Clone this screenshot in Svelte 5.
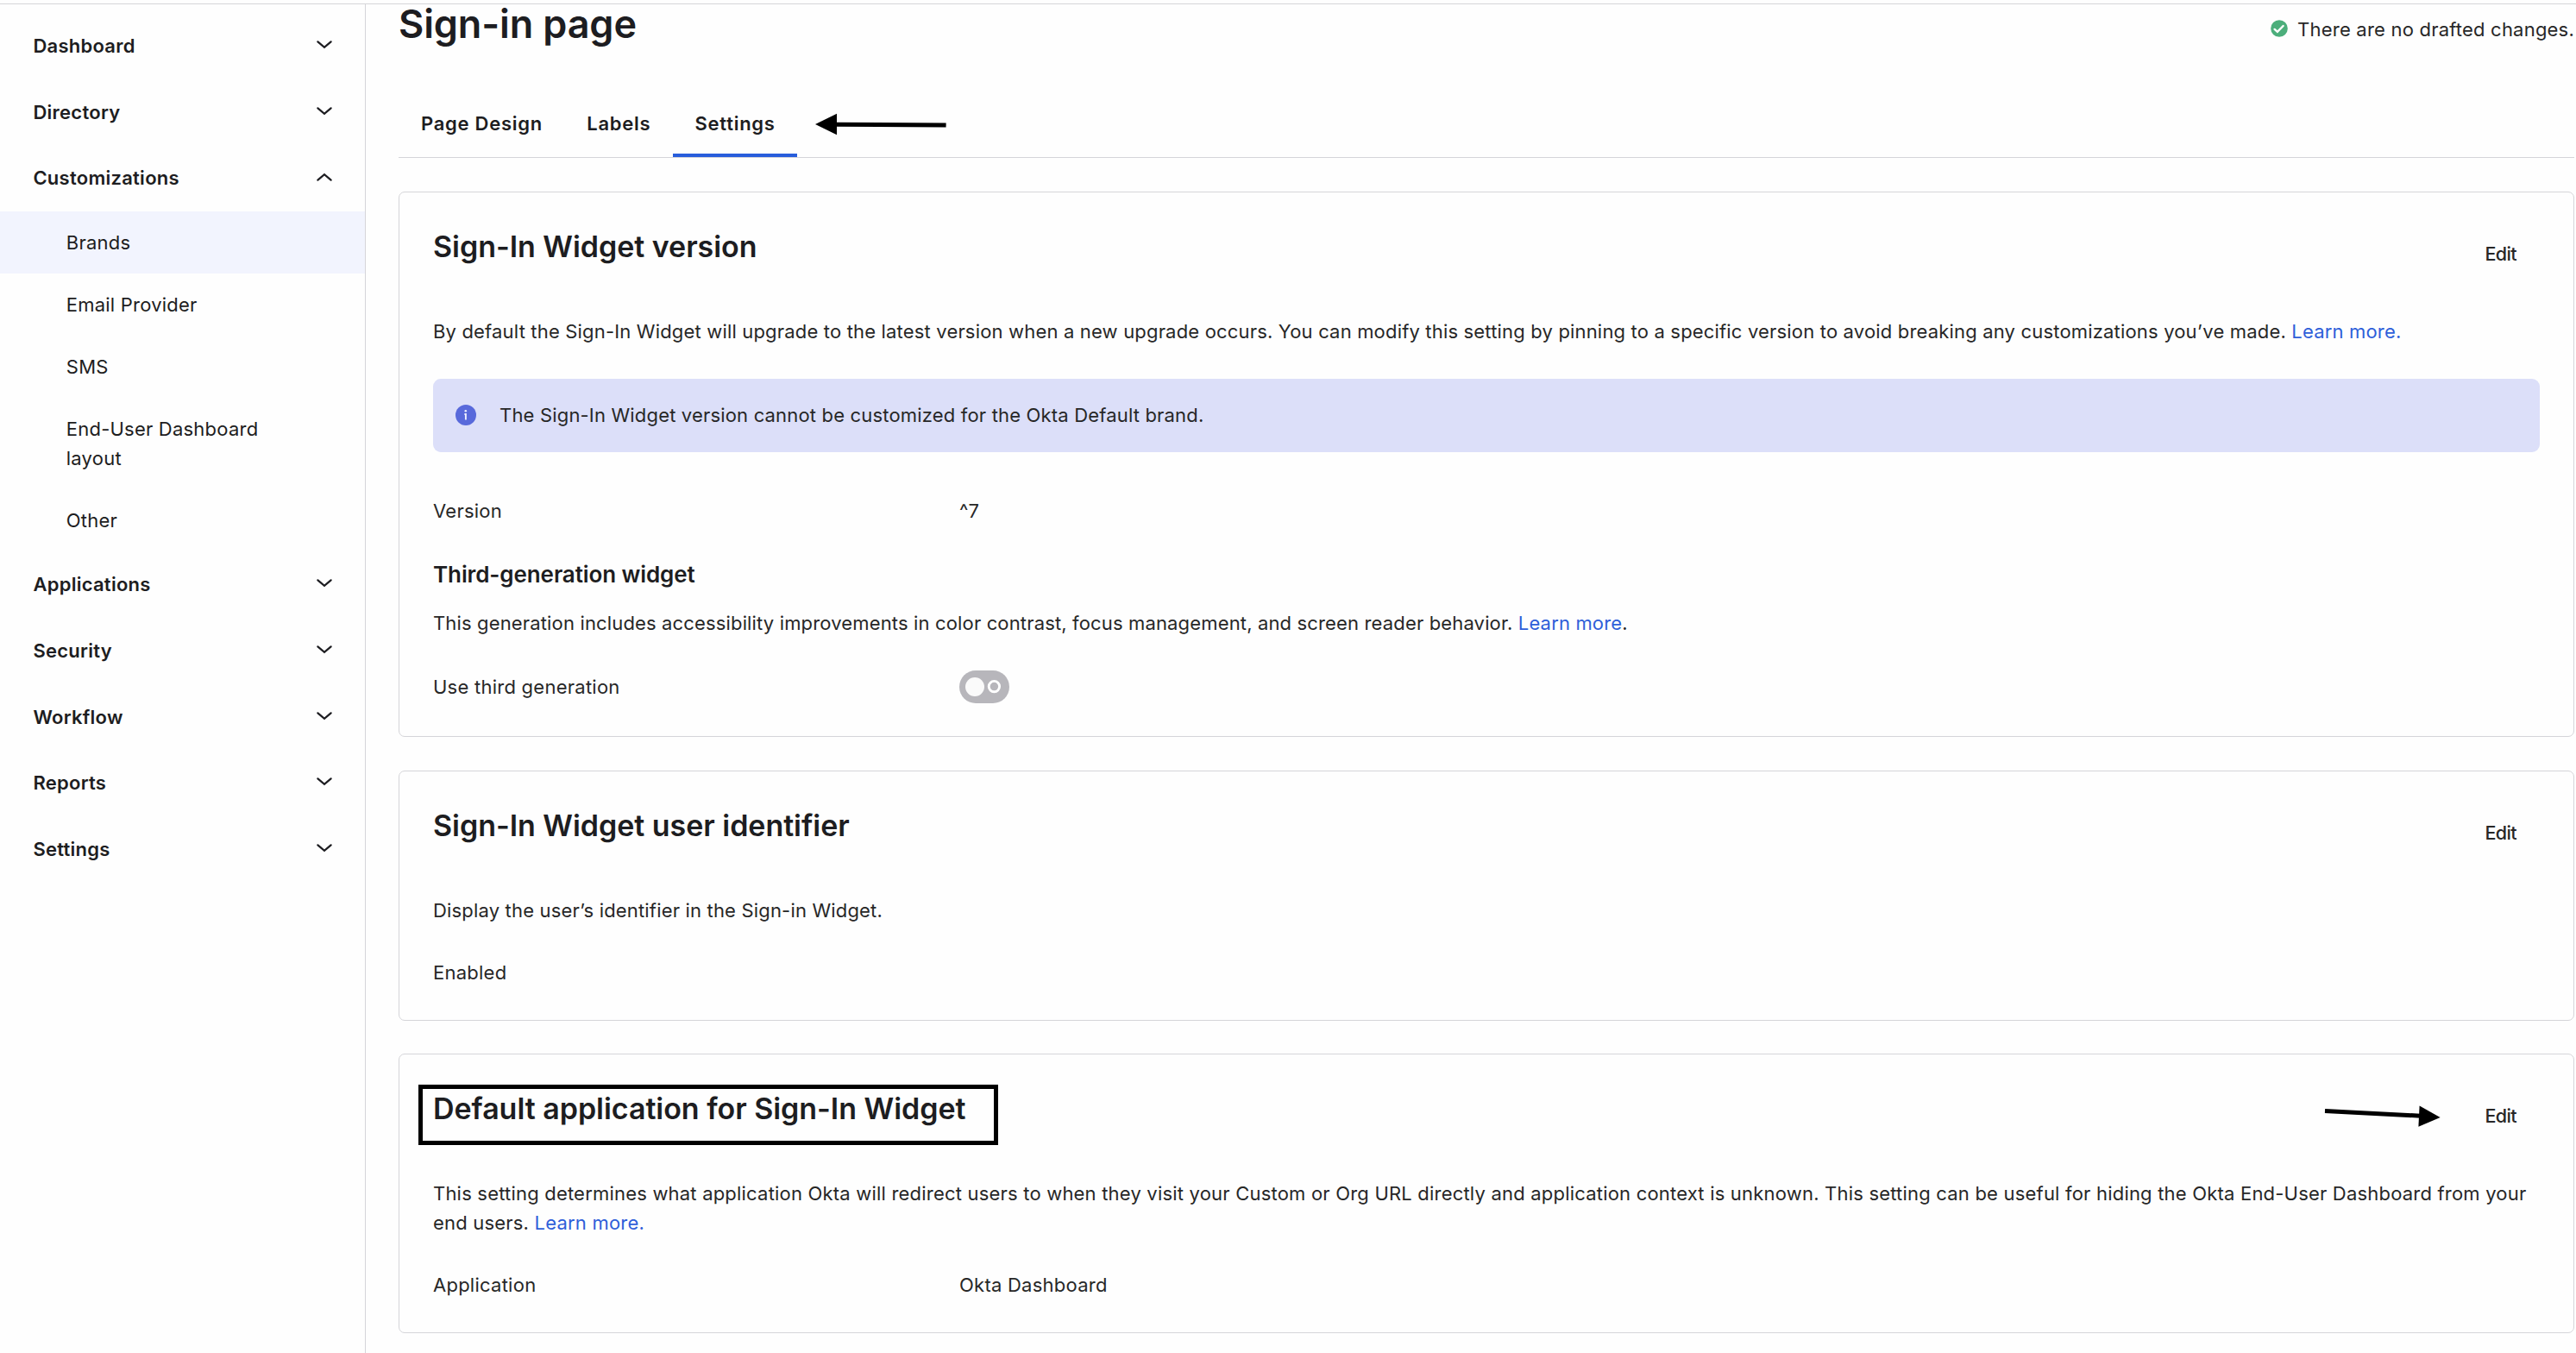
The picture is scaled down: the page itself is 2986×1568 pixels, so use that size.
<script lang="ts">
  interface NavItem {
    label: string;
    open?: boolean;
    children?: string[];
  }

  let nav: NavItem[] = $state([
    { label: 'Dashboard' },
    { label: 'Directory' },
    {
      label: 'Customizations',
      open: true,
      children: ['Brands', 'Email Provider', 'SMS', 'End-User Dashboard layout', 'Other']
    },
    { label: 'Applications' },
    { label: 'Security' },
    { label: 'Workflow' },
    { label: 'Reports' },
    { label: 'Settings' }
  ]);

  const tabs = ['Page Design', 'Labels', 'Settings'];

  let activeChild = $state('Brands');
  let activeTab = $state('Settings');
  let thirdGeneration = $state(false);
</script>

{#snippet cardHeader(title: string, highlighted = false)}
  <header class="card-header">
    <h2 class:highlighted>{title}</h2>
    <div class="card-actions">
      {#if highlighted}
        <svg class="pointer-right" width="136" height="28" viewBox="0 0 136 28">
          <path d="M1 7.6 L112 13.2" stroke="#000" stroke-width="5" />
          <path d="M110.6 1.5 L134.6 14.9 L109.4 25.7 Z" fill="#000" />
        </svg>
      {/if}
      <button class="edit">Edit</button>
    </div>
  </header>
{/snippet}

<div class="page">
  <nav class="sidebar">
    {#each nav as item}
      <button class="nav-item" onclick={() => (item.open = !item.open)}>
        <span>{item.label}</span>
        <svg class="chevron" class:up={item.open} width="18" height="10" viewBox="0 0 18 10">
          <path d="M1.4 1.3 L9 7.9 L16.6 1.3" fill="none" stroke="#1d1d21" stroke-width="2.2" stroke-linecap="round" />
        </svg>
      </button>
      {#if item.open && item.children}
        <ul class="subnav">
          {#each item.children as child}
            <li>
              <button
                class="subnav-item"
                class:active={child === activeChild}
                onclick={() => (activeChild = child)}
              >
                {child}
              </button>
            </li>
          {/each}
        </ul>
      {/if}
    {/each}
  </nav>

  <main>
    <header class="page-header">
      <h1>Sign-in page</h1>
      <div class="status">
        <svg width="20" height="20" viewBox="0 0 20 20">
          <circle cx="10" cy="10" r="9.8" fill="#4cae7b" />
          <path d="M4.6 10.9 L7.9 13.9 L14.6 7" fill="none" stroke="#fff" stroke-width="2.4" stroke-linecap="round" />
        </svg>
        <span>There are no drafted changes.</span>
      </div>
    </header>

    <div class="tabs">
      {#each tabs as tab}
        <button class="tab" class:active={tab === activeTab} onclick={() => (activeTab = tab)}>{tab}</button>
      {/each}
      <svg class="pointer-left" width="152" height="26" viewBox="0 0 152 26">
        <path d="M24 13.2 L151.6 14" stroke="#000" stroke-width="5" />
        <path d="M0 13 L25 0.8 L25 25.2 Z" fill="#000" />
      </svg>
    </div>

    <div class="cards">
      <section class="card">
        {@render cardHeader('Sign-In Widget version')}
        <p class="lead">
          By default the Sign-In Widget will upgrade to the latest version when a new upgrade occurs. You can modify this setting by pinning to a specific version to avoid breaking any customizations you’ve made. <a href="#learn">Learn more.</a>
        </p>
        <div class="alert">
          <svg width="24" height="24" viewBox="0 0 24 24">
            <circle cx="12" cy="12" r="12" fill="#5869db" />
            <circle cx="11.8" cy="7.2" r="1.3" fill="#eef0ff" />
            <path d="M10.4 11 H11.9 V17.6" fill="none" stroke="#eef0ff" stroke-width="1.9" />
          </svg>
          <span>The Sign-In Widget version cannot be customized for the Okta Default brand.</span>
        </div>
        <div class="field version">
          <span>Version</span>
          <span>^7</span>
        </div>
        <h3>Third-generation widget</h3>
        <p class="generation">
          This generation includes accessibility improvements in color contrast, focus management, and screen reader behavior. <a href="#learn">Learn more</a>.
        </p>
        <div class="field">
          <span>Use third generation</span>
          <button
            class="toggle"
            role="switch"
            aria-checked={thirdGeneration}
            aria-label="Use third generation"
            onclick={() => (thirdGeneration = !thirdGeneration)}
          >
            <svg width="58" height="38" viewBox="0 0 58 38">
              <circle cx="18" cy="19" r="11" fill="#fafafa" />
              <circle cx="40.4" cy="18.6" r="6.2" fill="none" stroke="#fff" stroke-width="2.9" />
            </svg>
          </button>
        </div>
      </section>

      <section class="card">
        {@render cardHeader('Sign-In Widget user identifier')}
        <p class="lead">Display the user’s identifier in the Sign-in Widget.</p>
        <div class="field">
          <span>Enabled</span>
        </div>
      </section>

      <section class="card">
        {@render cardHeader('Default application for Sign-In Widget', true)}
        <p class="lead redirect">
          This setting determines what application Okta will redirect users to when they visit your Custom or Org URL directly and application context is unknown. This setting can be useful for hiding the Okta End-User Dashboard from your end users. <a href="#learn">Learn more.</a>
        </p>
        <div class="field">
          <span>Application</span>
          <span>Okta Dashboard</span>
        </div>
      </section>
    </div>
  </main>
</div>

<style>
  :global(body) {
    background: #fefefe;
    overflow: hidden;
  }

  .page {
    display: flex;
    box-sizing: border-box;
    height: 1568px;
    margin-top: 4px;
    border-top: 1px solid #d5d5d9;
    color: #272727;
    font-family: Inter, 'Liberation Sans', sans-serif;
    font-size: 22px;
    line-height: 34px;
    letter-spacing: 0.175px;
  }

  h1,
  h2,
  h3,
  p,
  ul {
    margin: 0;
    padding: 0;
  }

  h1,
  h2,
  h3 {
    color: #1d1d21;
    font-weight: 600;
  }

  button {
    padding: 0;
    border: 0;
    background: none;
    color: #1d1d21;
    font: inherit;
    letter-spacing: inherit;
    text-align: left;
    cursor: pointer;
  }

  a {
    color: #2e5fd9;
    text-decoration: none;
  }

  /* Sidebar */
  .sidebar {
    box-sizing: border-box;
    flex: 0 0 424px;
    padding-top: 9.4px;
    border-right: 1px solid #d5d5d9;
    letter-spacing: 0.22px;
  }

  .nav-item {
    display: flex;
    align-items: center;
    justify-content: space-between;
    box-sizing: border-box;
    width: 100%;
    height: 76.75px;
    padding: 0 38.5px 0 38.4px;
    font-weight: 600;
    letter-spacing: 0.26px;
  }

  .chevron {
    margin-top: -2px;
  }

  .chevron.up {
    transform: rotate(180deg);
  }

  .subnav {
    list-style: none;
  }

  .subnav-item {
    display: block;
    width: 100%;
    padding: 19px 110px 19px 76.8px;
  }

  .subnav-item.active {
    background: #f2f4fe;
  }

  /* Main column */
  main {
    flex: 1;
    min-width: 0;
    padding: 0 2px 0 38px;
  }

  .page-header {
    display: flex;
    justify-content: space-between;
    height: 99px;
  }

  h1 {
    font-size: 45px;
    line-height: 46px;
    letter-spacing: -0.13px;
  }

  .status {
    display: flex;
    align-items: center;
    gap: 11px;
    height: 34px;
    padding-top: 12px;
    letter-spacing: 0.21px;
  }

  .status svg {
    margin-top: -2px;
  }

  .tabs {
    display: flex;
    height: 78px;
    border-bottom: 1px solid #d5d5d9;
  }

  .tab {
    padding: 0 25.3px 0 26px;
    font-weight: 600;
    letter-spacing: 0.73px;
  }

  .tab.active {
    background: linear-gradient(#285ddb, #285ddb) bottom / 100% 4px no-repeat;
    border-radius: 2px 2px 0 0;
  }

  .pointer-left {
    align-self: center;
    margin: 1px 0 0 21px;
  }

  .cards {
    display: flex;
    flex-direction: column;
    gap: 38.5px;
    margin-top: 39px;
  }

  .card {
    padding: 39px 39px 38px;
    border: 1px solid #d5d5d9;
    border-radius: 7px;
  }

  .card-header {
    display: flex;
    justify-content: space-between;
    height: 64px;
  }

  h2 {
    position: relative;
    height: 46px;
    font-size: 34px;
    line-height: 48px;
    letter-spacing: -0.04px;
  }

  /* Callout frame drawn round the heading */
  h2.highlighted::after {
    content: '';
    position: absolute;
    top: -4px;
    left: -17px;
    width: 662px;
    height: 60px;
    border: 5px solid #000;
  }

  .card-actions {
    display: flex;
    align-items: center;
  }

  .pointer-right {
    margin: 1px 25px 0 0;
  }

  .edit {
    height: 64px;
    padding: 0 27px 0 25.5px;
    color: #272727;
    font-size: 21.5px;
    font-weight: 500;
    letter-spacing: -0.6px;
  }

  .lead {
    margin-top: 41px;
  }

  .redirect {
    letter-spacing: 0.2px;
  }

  .alert {
    display: flex;
    align-items: center;
    gap: 27px;
    height: 84px;
    margin-top: 38px;
    padding: 0 26px 1px;
    border-radius: 9px;
    background: #dcdff9;
  }

  .field {
    display: grid;
    grid-template-columns: 610px 1fr;
    align-items: center;
    margin-top: 38px;
    letter-spacing: 0.25px;
  }

  .version {
    margin-top: 51px;
  }

  h3 {
    margin-top: 39px;
    font-size: 26px;
    line-height: 36px;
    letter-spacing: -0.1px;
  }

  .generation {
    margin-top: 21px;
    letter-spacing: 0.15px;
  }

  .toggle {
    width: 58px;
    height: 38px;
    border-radius: 19px;
    background: #b7b6bb;
  }

  .toggle svg {
    display: block;
  }
</style>
